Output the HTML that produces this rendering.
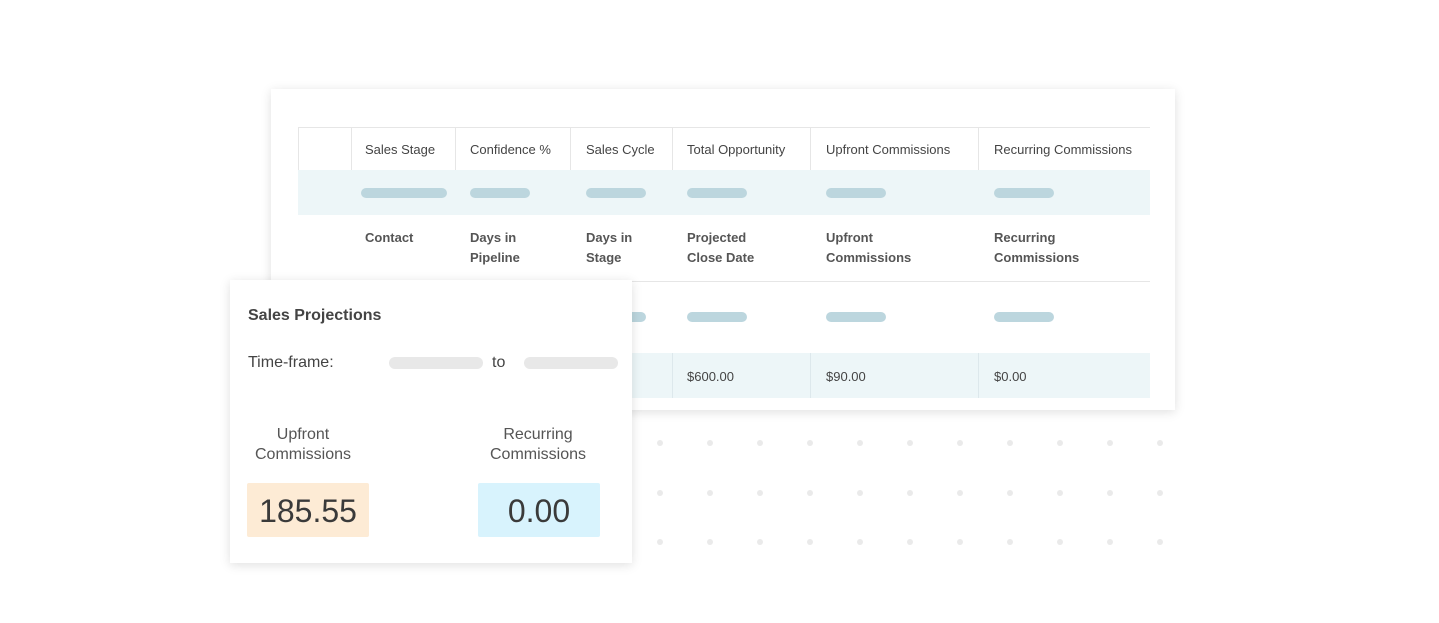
<!DOCTYPE html>
<html><head><style>
body{margin:0;width:1439px;height:623px;background:#fff;position:relative;overflow:hidden;font-family:"Liberation Sans",Arial,sans-serif;color:#444}
.a{position:absolute}
.dot{position:absolute;width:6px;height:6px;border-radius:50%;background:#eaeaea}
.card{position:absolute;background:#fff;box-shadow:0 2px 10px rgba(0,0,0,0.13)}
.vl{position:absolute;width:1px;background:#e6e6e6}
.hl{position:absolute;height:1px;background:#e6e6e6}
.t{position:absolute;font-size:13px;color:#444;line-height:20px}
.b{position:absolute;height:10px;border-radius:5px;background:#bcd6de}
.g{position:absolute;height:12px;border-radius:6px;background:#e8e8e8}
</style></head><body>
<div id="dots"></div>
<div class="card" style="left:271px;top:89px;width:904px;height:321px">
  <div class="a" style="left:27px;top:81px;width:852px;height:45px;background:#edf6f8"></div>
  <div class="a" style="left:27px;top:264px;width:852px;height:45px;background:#edf6f8"></div>
  <div class="hl" style="left:27px;top:38px;width:852px"></div>
  <div class="hl" style="left:27px;top:192px;width:852px"></div>
  <div class="vl" style="left:27px;top:38px;height:43px"></div>
  <div class="vl" style="left:80px;top:38px;height:43px"></div>
  <div class="vl" style="left:184px;top:38px;height:43px"></div>
  <div class="vl" style="left:299px;top:38px;height:43px"></div>
  <div class="vl" style="left:401px;top:38px;height:43px"></div>
  <div class="vl" style="left:539px;top:38px;height:43px"></div>
  <div class="vl" style="left:707px;top:38px;height:43px"></div>
  <div class="vl" style="left:401px;top:264px;height:45px;background:#dde8ec"></div>
  <div class="vl" style="left:539px;top:264px;height:45px;background:#dde8ec"></div>
  <div class="vl" style="left:707px;top:264px;height:45px;background:#dde8ec"></div>
  <div class="t" style="left:94px;top:51px">Sales Stage</div>
  <div class="t" style="left:199px;top:51px">Confidence %</div>
  <div class="t" style="left:315px;top:51px">Sales Cycle</div>
  <div class="t" style="left:416px;top:51px">Total Opportunity</div>
  <div class="t" style="left:555px;top:51px">Upfront Commissions</div>
  <div class="t" style="left:723px;top:51px">Recurring Commissions</div>
  <div class="b" style="left:90px;top:99px;width:86px"></div>
  <div class="b" style="left:199px;top:99px;width:60px"></div>
  <div class="b" style="left:315px;top:99px;width:60px"></div>
  <div class="b" style="left:416px;top:99px;width:60px"></div>
  <div class="b" style="left:555px;top:99px;width:60px"></div>
  <div class="b" style="left:723px;top:99px;width:60px"></div>
  <div class="t" style="left:94px;top:139px;font-weight:bold;color:#555">Contact</div>
  <div class="t" style="left:199px;top:139px;font-weight:bold;color:#555">Days in<br>Pipeline</div>
  <div class="t" style="left:315px;top:139px;font-weight:bold;color:#555">Days in<br>Stage</div>
  <div class="t" style="left:416px;top:139px;font-weight:bold;color:#555">Projected<br>Close Date</div>
  <div class="t" style="left:555px;top:139px;font-weight:bold;color:#555">Upfront<br>Commissions</div>
  <div class="t" style="left:723px;top:139px;font-weight:bold;color:#555">Recurring<br>Commissions</div>
  <div class="b" style="left:315px;top:223px;width:60px"></div>
  <div class="b" style="left:416px;top:223px;width:60px"></div>
  <div class="b" style="left:555px;top:223px;width:60px"></div>
  <div class="b" style="left:723px;top:223px;width:60px"></div>
  <div class="t" style="left:416px;top:278px">$600.00</div>
  <div class="t" style="left:555px;top:278px">$90.00</div>
  <div class="t" style="left:723px;top:278px">$0.00</div>
</div>
<div class="card" style="left:230px;top:280px;width:402px;height:283px">
  <div class="a" style="left:18px;top:27px;font-size:16px;font-weight:bold;color:#444">Sales Projections</div>
  <div class="a" style="left:18px;top:74px;font-size:16px;color:#444">Time-frame:</div>
  <div class="g" style="left:159px;top:77px;width:94px"></div>
  <div class="a" style="left:262px;top:74px;font-size:16px;color:#444">to</div>
  <div class="g" style="left:294px;top:77px;width:94px"></div>
  <div class="a" style="left:8px;top:145px;width:130px;text-align:center;font-size:16px;line-height:20px;color:#555">Upfront<br>Commissions</div>
  <div class="a" style="left:243px;top:145px;width:130px;text-align:center;font-size:16px;line-height:20px;color:#555">Recurring<br>Commissions</div>
  <div class="a" style="left:17px;top:203px;width:122px;height:54px;background:#fdebd5;border-radius:2px;text-align:center;line-height:56px;font-size:32px;color:#3a3a3a">185.55</div>
  <div class="a" style="left:248px;top:203px;width:122px;height:54px;background:#d8f3fd;border-radius:2px;text-align:center;line-height:56px;font-size:32px;color:#3a3a3a">0.00</div>
</div>
<script>
var d=document.getElementById('dots'),h='';
[443,493,542].forEach(function(y){for(var i=0;i<11;i++)h+='<div class="dot" style="left:'+(657+50*i)+'px;top:'+(y-3)+'px"></div>';});
d.innerHTML=h;
</script>
</body></html>
